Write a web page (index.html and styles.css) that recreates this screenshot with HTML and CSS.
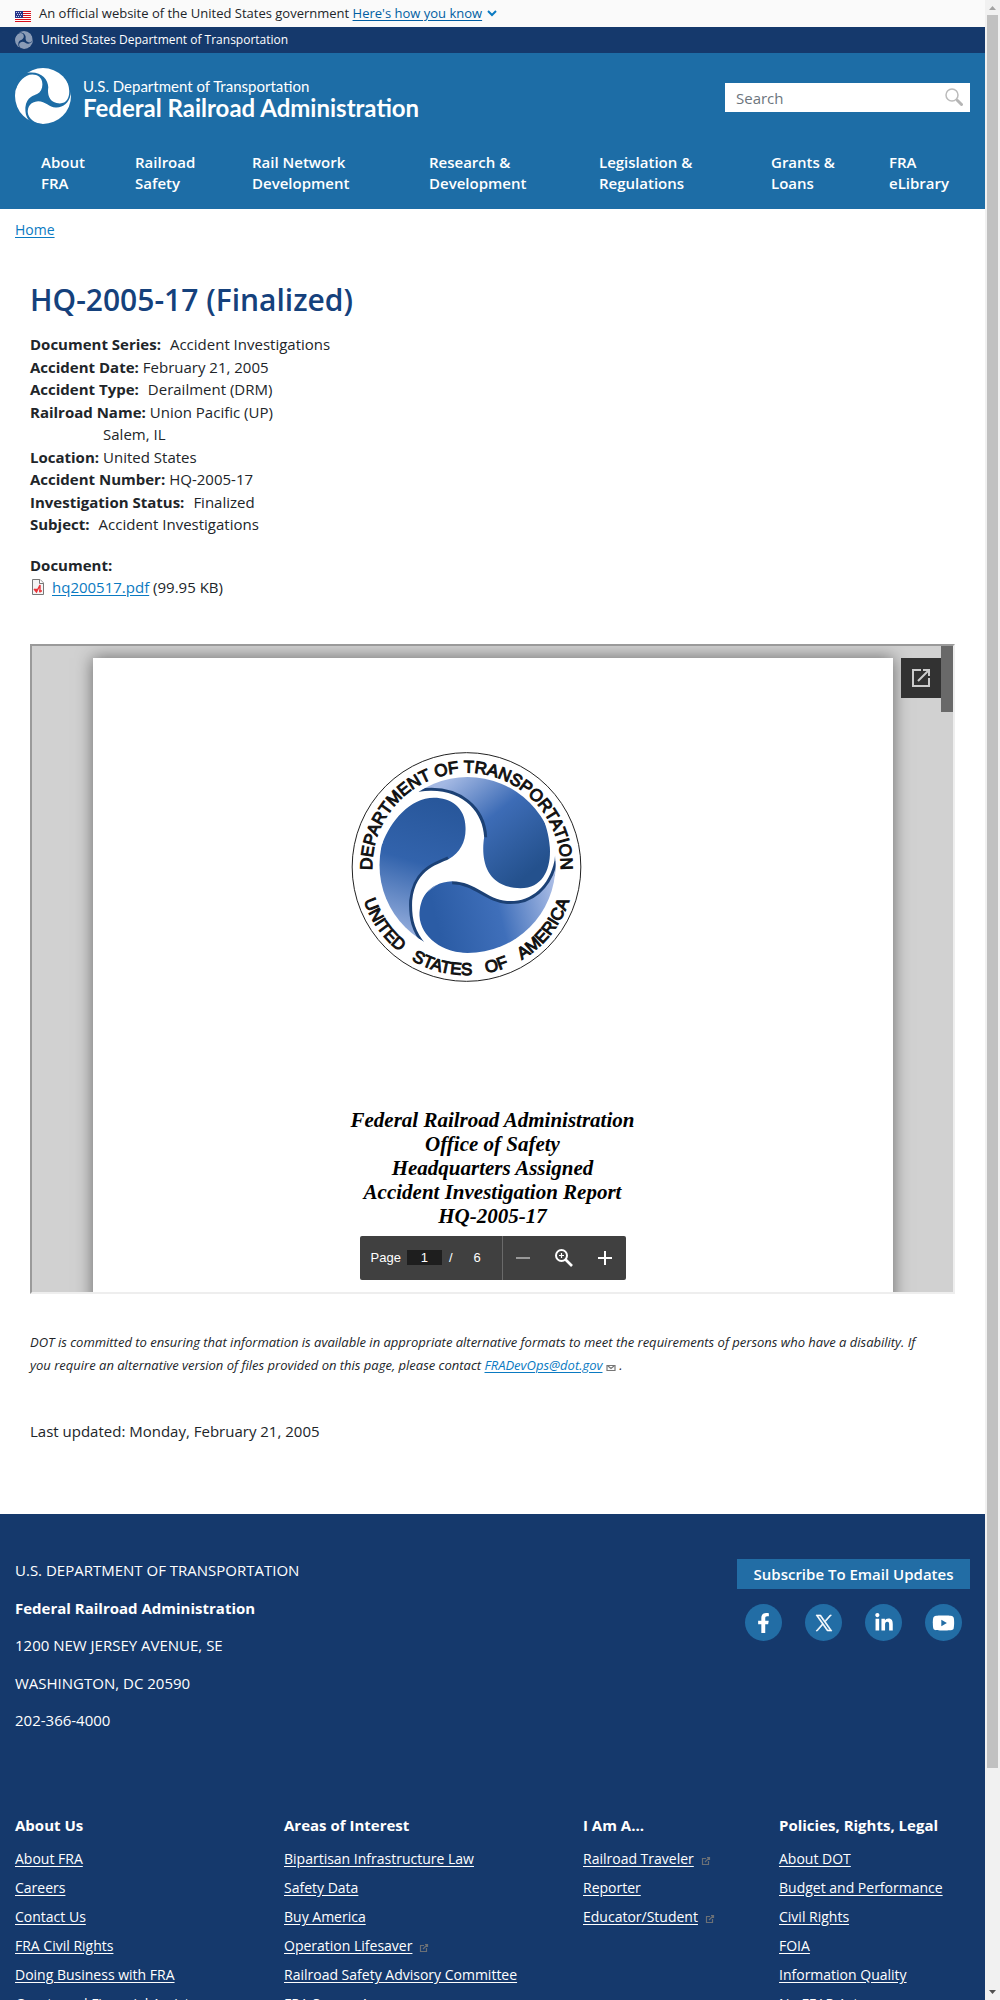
FILE: index.html
```html
<!DOCTYPE html>
<html lang="en">
<head>
<meta charset="utf-8">
<title>HQ-2005-17 (Finalized) | FRA</title>
<link rel="stylesheet" href="styles.css">
</head>
<body>
<svg class="defs" aria-hidden="true">
  <symbol id="triskelion" viewBox="237 169 528 528">
    <path d="M355 213C480 195 548 270 551 350C543 400 545 500 660 503C730 503 752 440 748 380C745 340 735 310 725 285L775 300L762 420C745 500 690 545 620 541C560 538 525 483 455 482C380 487 357 535 357 585C360 650 430 697 501 697L440 715L378 672C340 630 333 590 335 540C345 440 420 430 445 415C480 395 497 360 495 320C495 260 450 231 400 231C330 231 270 300 245 370L225 330L290 225Z"/>
  </symbol>
  <symbol id="external" viewBox="0 0 10 10">
    <path d="M5 2.500H1.500V8.500H7.500V5M4 6L8 2M6 1.500H8.500V4" fill="none" stroke="#6b7076" stroke-width="1.200"/>
  </symbol>
</svg>
<div class="window">
  <div class="page">
    <div class="gov-banner">
      <svg class="flag" viewBox="0 0 16 11" aria-hidden="true"><path fill="#fff" d="M0 0h16v11H0z"/><path stroke="#d8101c" d="M0 .500h16M0 2.500h16M0 4.500h16M0 6.500h16M0 8.500h16M0 10.500h16"/><path fill="#27368b" d="M0 0h8v7H0z"/><path stroke="#c9cfe8" stroke-dasharray="1 1" d="M1 1.500h6M2 3.500h5M1 5.500h6"/></svg>
      <span>An official website of the United States government <a class="how" href="#how">Here's how you know</a></span>
      <svg class="chevron" viewBox="0 0 10 7" aria-hidden="true"><path d="M1 1L5 5L9 1" fill="none" stroke="#0a7ac2" stroke-width="2"/></svg>
    </div>
    <div class="dot-bar">
      <svg class="dot-mark" viewBox="0 0 18 18" aria-hidden="true"><circle cx="9" cy="9" r="9" fill="#8a9bb6"/><use href="#triskelion" width="18" height="18" fill="#15396c"/></svg>
      <span>United States Department of Transportation</span>
    </div>
    <header class="masthead">
      <div class="brand-row">
        <a class="brand" href="#home">
          <svg class="brand-mark" viewBox="0 0 56 56" aria-hidden="true"><circle cx="28" cy="28" r="28" fill="#fff"/><use href="#triskelion" width="56" height="56" fill="#1d6da6"/></svg>
          <span class="brand-text"><span class="brand-dept">U.S. Department of Transportation</span><span class="brand-name">Federal Railroad Administration</span></span>
        </a>
        <form class="search">
          <input class="search-input" type="text" placeholder="Search" aria-label="Search">
          <button class="search-button" type="button" aria-label="Submit search"><svg viewBox="0 0 18 18" aria-hidden="true"><circle cx="7" cy="7" r="6" fill="none" stroke="#bbb" stroke-width="1.500"/><path d="M11 11l2 2" stroke="#bbb" stroke-width="1.500"/><path d="M12.500 12.500l4 4" stroke="#b5b5b5" stroke-width="3" stroke-linecap="round"/></svg></button>
        </form>
      </div>
      <nav class="main-nav">
        <a href="#about">About<br>FRA</a>
        <a href="#safety">Railroad<br>Safety</a>
        <a href="#network">Rail Network<br>Development</a>
        <a href="#research">Research &amp;<br>Development</a>
        <a href="#legislation">Legislation &amp;<br>Regulations</a>
        <a href="#grants">Grants &amp;<br>Loans</a>
        <a href="#elibrary">FRA<br>eLibrary</a>
      </nav>
    </header>
    <div class="breadcrumb"><a href="#home">Home</a></div>
    <main class="content">
      <h1>HQ-2005-17 (Finalized)</h1>
      <div class="fields">
        <div class="field wide"><b>Document Series:</b><span>Accident Investigations</span></div>
        <div class="field"><b>Accident Date:</b><span>February 21, 2005</span></div>
        <div class="field wide"><b>Accident Type:</b><span>Derailment (DRM)</span></div>
        <div class="field"><b>Railroad Name:</b><span>Union Pacific (UP)</span></div>
        <div class="field"><b>Location:</b><span>Salem, IL<br>United States</span></div>
        <div class="field"><b>Accident Number:</b><span>HQ-2005-17</span></div>
        <div class="field wide"><b>Investigation Status:</b><span>Finalized</span></div>
        <div class="field wide"><b>Subject:</b><span>Accident Investigations</span></div>
      </div>
      <div class="document">
        <b>Document:</b>
        <div class="file">
          <svg class="pdf-icon" viewBox="0 0 16 16" aria-hidden="true"><path d="M2.500 .500H10L13.500 4V15.500H2.500Z" fill="#f4f4f4" stroke="#777"/><path d="M9.500 .500V4.500H13.500" fill="#fff" stroke="#777"/><path d="M4 10L6.500 13L10 6V13.500M4 10.500H7L5.500 12.500M9 12H12" fill="none" stroke="#e8343a" stroke-width="1.400"/></svg>
          <span><a href="#pdf">hq200517.pdf</a> (99.95 KB)</span>
        </div>
      </div>
      <section class="viewer" aria-label="Document preview">
        <article class="sheet">
          <svg class="seal" viewBox="152 94 692 690" role="img" aria-label="Department of Transportation seal">
            <defs>
              <clipPath id="disc"><circle cx="501" cy="433" r="264"/></clipPath>
              <linearGradient id="gl" gradientUnits="userSpaceOnUse" x1="440" y1="250" x2="320" y2="660"><stop offset="0" stop-color="#28579b"/><stop offset=".45" stop-color="#3263ac"/><stop offset="1" stop-color="#9cb3e0"/></linearGradient>
              <linearGradient id="gr" gradientUnits="userSpaceOnUse" x1="430" y1="190" x2="660" y2="480"><stop offset="0" stop-color="#a3b8e3"/><stop offset=".45" stop-color="#3d6cb6"/><stop offset="1" stop-color="#24518d"/></linearGradient>
              <linearGradient id="gb" gradientUnits="userSpaceOnUse" x1="400" y1="570" x2="770" y2="480"><stop offset="0" stop-color="#2b5ca5"/><stop offset=".5" stop-color="#3f6fba"/><stop offset="1" stop-color="#b0c1e8"/></linearGradient>
              <path id="top-arc" d="M215 439A283 283 0 0 1 781 439"/>
              <path id="bottom-arc" d="M174 439A324 324 0 0 0 822 439"/>
            </defs>
            <circle cx="498" cy="439" r="343" fill="#fff" stroke="#222" stroke-width="3"/>
            <g clip-path="url(#disc)">
              <path d="M480 440L525 350L460 222H200V720H360L345 540Z" fill="url(#gl)"/>
              <path d="M480 440L525 350L460 222L300 200V150H800V425L720 510L640 525Z" fill="url(#gr)"/>
              <path d="M480 440L640 520L710 505L752 450L765 415H800V720H360L345 540Z" fill="url(#gb)"/>
              <path d="M355 213C480 195 548 270 551 350M762 420C745 500 690 545 620 541C560 538 525 483 455 482M378 672C340 630 333 590 335 540C345 440 420 430 445 415" fill="none" stroke="#1c4175" stroke-width="18"/>
            </g>
            <use href="#triskelion" x="237" y="169" width="528" height="528" fill="#fff"/>
            <text class="seal-text" text-anchor="middle"><textPath href="#top-arc" startOffset="50%">DEPARTMENT OF TRANSPORTATION</textPath></text>
            <text class="seal-text" text-anchor="middle"><textPath href="#bottom-arc" startOffset="50%">UNITED &#160;&#160;STATES &#160;&#160;OF &#160;&#160;AMERICA</textPath></text>
          </svg>
          <p class="report-title">Federal Railroad Administration<br>Office of Safety<br>Headquarters Assigned<br>Accident Investigation Report<br>HQ-2005-17</p>
        </article>
        <button class="pop-out" type="button" aria-label="Open in new window"><svg viewBox="0 0 18 18" aria-hidden="true"><path d="M9 1H1V17H17V9M11 1H17V7M6 12L16.500 1.500" fill="none" stroke="#ccc" stroke-width="2"/></svg></button>
        <div class="viewer-thumb"></div>
        <div class="toolbar">
          <label for="page-no">Page</label>
          <input id="page-no" class="page-no" type="text" value="1">
          <span class="slash">/</span>
          <span class="total">6</span>
          <div class="zoom-tools">
            <button type="button" aria-label="Zoom out"><svg viewBox="0 0 18 18" aria-hidden="true"><path d="M2 9H16" stroke="#999" stroke-width="2"/></svg></button>
            <button type="button" aria-label="Fit page"><svg viewBox="0 0 18 18" aria-hidden="true"><circle cx="6.500" cy="6.500" r="5.500" fill="none" stroke="#fff" stroke-width="2"/><path d="M10.500 10.500L17 17" stroke="#fff" stroke-width="2.600"/><path d="M6.500 4V9M4 6.500H9" stroke="#fff" stroke-width="1.200"/></svg></button>
            <button type="button" aria-label="Zoom in"><svg viewBox="0 0 18 18" aria-hidden="true"><path d="M2 9H16M9 2V16" stroke="#fff" stroke-width="2"/></svg></button>
          </div>
        </div>
      </section>
      <p class="notice">DOT is committed to ensuring that information is available in appropriate alternative formats to meet the requirements of persons who have a disability. If you require an alternative version of files provided on this page, please contact <a href="#mail">FRADevOps@dot.gov</a> <svg class="mail-icon" viewBox="0 0 10 8" aria-hidden="true"><path d="M1 1.500H9V6.500H1Z M2 2L5 4.500L8 2" fill="none" stroke="#777" stroke-width="1.200"/></svg> .</p>
      <p class="updated">Last updated: Monday, February 21, 2005</p>
    </main>
    <footer class="footer">
      <div class="footer-top">
        <address class="address">
          <p>U.S. DEPARTMENT OF TRANSPORTATION</p>
          <p><b>Federal Railroad Administration</b></p>
          <p>1200 NEW JERSEY AVENUE, SE</p>
          <p>WASHINGTON, DC 20590</p>
          <p>202-366-4000</p>
        </address>
        <div class="connect">
          <a class="subscribe" href="#subscribe">Subscribe To Email Updates</a>
          <div class="social">
            <a href="#facebook" aria-label="Facebook"><svg viewBox="0 0 320 512" height="20" width="13"><path d="M279.140 288l14.220-92.660h-88.910v-60.130c0-25.350 12.420-50.060 52.240-50.060h40.420V6.260S260.430 0 225.360 0c-73.220 0-121.080 44.380-121.080 124.720v70.620H22.890V288h81.390v224h100.170V288z"/></svg></a>
            <a href="#x" aria-label="X"><svg class="x-mark" viewBox="0 0 24 24" height="16" width="16"><path d="M14.258 10.152 23.176 0h-2.113l-7.747 8.813L7.133 0H0l9.352 13.328L0 23.973h2.113l8.176-9.309 6.531 9.309h7.133zm-2.895 3.293-.949-1.328L2.875 1.560h3.246l6.086 8.523.945 1.328 7.910 11.078h-3.246z"/></svg></a>
            <a href="#linkedin" aria-label="LinkedIn"><svg viewBox="0 0 448 512" height="20" width="18"><path d="M100.280 448H7.400V148.900h92.880zM53.790 108.100C24.090 108.100 0 83.500 0 53.800a53.790 53.790 0 0 1 107.580 0c0 29.700-24.100 54.300-53.790 54.300zM447.900 448h-92.680V302.400c0-34.700-.7-79.200-48.290-79.200-48.290 0-55.690 37.700-55.690 76.700V448h-92.780V148.900h89.080v40.800h1.300c12.400-23.500 42.690-48.300 87.880-48.300 94 0 111.280 61.900 111.280 142.300V448z"/></svg></a>
            <a href="#youtube" aria-label="YouTube"><svg viewBox="0 0 576 512" height="20" width="23"><path d="M549.655 124.083c-6.281-23.650-24.787-42.276-48.284-48.597C458.781 64 288 64 288 64S117.220 64 74.629 75.486c-23.497 6.322-42.003 24.947-48.284 48.597-11.412 42.867-11.412 132.305-11.412 132.305s0 89.438 11.412 132.305c6.281 23.650 24.787 41.500 48.284 47.821C117.220 448 288 448 288 448s170.780 0 213.371-11.486c23.497-6.321 42.003-24.171 48.284-47.821 11.412-42.867 11.412-132.305 11.412-132.305s0-89.438-11.412-132.305zm-317.510 213.508V175.185l142.739 81.205-142.739 81.201z"/></svg></a>
          </div>
        </div>
      </div>
      <div class="footer-links">
        <section><h2>About Us</h2><ul>
          <li><a href="#a1">About FRA</a></li><li><a href="#a2">Careers</a></li><li><a href="#a3">Contact Us</a></li><li><a href="#a4">FRA Civil Rights</a></li><li><a href="#a5">Doing Business with FRA</a></li><li><a href="#a6">Grants and Financial Assistance</a></li></ul></section>
        <section><h2>Areas of Interest</h2><ul>
          <li><a href="#b1">Bipartisan Infrastructure Law</a></li><li><a href="#b2">Safety Data</a></li><li><a href="#b3">Buy America</a></li><li><a href="#b4">Operation Lifesaver</a><svg class="ext"><use href="#external"/></svg></li><li><a href="#b5">Railroad Safety Advisory Committee</a></li><li><a href="#b6">FRA Screen Accessory</a></li></ul></section>
        <section><h2>I Am A...</h2><ul>
          <li><a href="#c1">Railroad Traveler</a><svg class="ext"><use href="#external"/></svg></li><li><a href="#c2">Reporter</a></li><li><a href="#c3">Educator/Student</a><svg class="ext"><use href="#external"/></svg></li></ul></section>
        <section><h2>Policies, Rights, Legal</h2><ul>
          <li><a href="#d1">About DOT</a></li><li><a href="#d2">Budget and Performance</a></li><li><a href="#d3">Civil Rights</a></li><li><a href="#d4">FOIA</a></li><li><a href="#d5">Information Quality</a></li><li><a href="#d6">No FEAR Act</a></li></ul></section>
      </div>
    </footer>
  </div>
  <div class="scrollbar" aria-hidden="true">
    <svg viewBox="0 0 15 15"><path d="M4 10H11L7.500 6Z" fill="#a3a3a3"/></svg>
    <div class="track"><div class="thumb"></div></div>
    <svg viewBox="0 0 15 15"><path d="M4 5H11L7.500 9Z" fill="#505050"/></svg>
  </div>
</div>
</body>
</html>
```
FILE: styles.css
```css
* { box-sizing: border-box; }
body {
  margin: 0;
  font-family: "Open Sans", "Noto Sans", sans-serif;
  font-size: 15px;
  line-height: 1.5;
  color: #212529;
  background: #fff;
}
p, h1, h2, ul { margin: 0; padding: 0; }
ul { list-style: none; }
a { color: #0a7ac2; text-underline-offset: 2px; }
svg { display: block; flex: none; }
.defs { position: absolute; width: 0; height: 0; }
.window { display: flex; height: 100vh; overflow: hidden; }
.page { flex: 1; min-width: 0; overflow: hidden; }

.scrollbar { display: flex; flex-direction: column; width: 15px; background: #f1f1f1; }
.scrollbar svg { width: 15px; height: 15px; }
.track { flex: 1; padding: 0 2px; }
.thumb { height: 89%; background: #c1c1c1; }

.gov-banner {
  display: flex; align-items: center;
  height: 27px; padding: 0 15px;
  background: #fafafa; font-size: 13px;
}
.flag { width: 16px; height: 11px; margin: 5px 8px 0 0; }
.how { color: #005ea2; }
.chevron { width: 10px; height: 7px; margin-left: 5px; }
.dot-bar {
  display: flex; align-items: center; gap: 8px;
  height: 26px; padding: 0 15px;
  background: #15396c; color: #fff; font-size: 12px;
}
.dot-mark { width: 18px; height: 18px; }

.masthead { padding: 15px; background: #1d6da6; color: #fff; }
.brand-row { display: flex; justify-content: space-between; align-items: flex-start; }
.brand { display: flex; align-items: center; gap: 12px; color: #fff; text-decoration: none; }
.brand-mark { width: 56px; height: 56px; }
.brand-text { display: flex; flex-direction: column; padding-top: 4px; font-family: Lato, sans-serif; }
.brand-dept { font-size: 15px; line-height: 20px; }
.brand-name { font-size: 24px; line-height: 24px; font-weight: 700; }
.search { display: flex; width: 245px; height: 29px; margin-top: 15px; background: #fff; }
.search-input {
  flex: 1; min-width: 0; padding: 2px 0 0 11px; border: 0; background: none;
  font: inherit; color: #212529;
}
.search-input::placeholder { color: #6c757d; opacity: 1; }
.search-button { display: flex; padding: 5px 7px; border: 0; background: none; }
.search-button svg { width: 18px; height: 18px; }
.main-nav {
  display: grid;
  grid-template-columns: 94fr 117fr 177fr 170fr 172fr 118fr 107fr;
  margin-top: 28px;
}
.main-nav a {
  padding-left: 26px; color: #fff; font-weight: 600; line-height: 21px;
  text-decoration: none; white-space: nowrap;
}

.breadcrumb { padding: 10px 15px 0; font-size: 14px; line-height: 21px; }
.content { padding: 37px 30px 72px; }
h1 { color: #15417c; font-size: 30px; line-height: 45px; font-weight: 600; }
.fields { margin-top: 11px; }
.field { display: flex; align-items: flex-end; gap: 4px; }
.field.wide { gap: 9px; }
.document { margin-top: 18px; }
.file { display: flex; align-items: center; gap: 6px; }
.pdf-icon { width: 16px; height: 16px; }

.viewer {
  position: relative; display: flex; justify-content: center;
  height: 650px; margin-top: 45px; padding: 12px 60px 0;
  overflow: hidden; background: #d1d1d1;
  border: 2px solid; border-color: #9a9a9a #eee #eee #9a9a9a;
}
.sheet {
  flex: 0 1 800px; height: 1035px; padding-top: 94px;
  background: #fff; box-shadow: 0 0 16px rgba(0, 0, 0, .5);
}
.seal { width: 231px; height: 230px; margin-left: 258px; }
.seal-text { font-family: "Liberation Sans", Arial, sans-serif; font-size: 51px; fill: #111; stroke: #111; stroke-width: 3px; }
.report-title {
  margin-top: 126px; text-align: center; color: #000;
  font: italic 700 21px/24px "Liberation Serif", "Times New Roman", serif;
}
.pop-out {
  position: absolute; top: 12px; right: 12px;
  display: grid; place-items: center; width: 40px; height: 40px;
  padding: 0; border: 0; background: #323232;
}
.pop-out svg { width: 18px; height: 18px; }
.viewer-thumb { position: absolute; top: 0; right: 0; width: 12px; height: 66px; background: #696969; }
.toolbar {
  position: absolute; bottom: 12px; left: calc(50% - 133px);
  display: flex; align-items: center;
  width: 266px; height: 44px; padding-left: 11px;
  border-radius: 2px; background: #404040; color: #fff;
  font: 13px/16px "Liberation Sans", Arial, sans-serif;
}
.page-no {
  width: 35px; height: 15px; margin-left: 6px; padding: 0; border: 0;
  background: #1e1e1e; color: #fff; font: inherit; text-align: center;
}
.slash { margin-left: 7px; }
.total { flex: 1; text-align: center; }
.zoom-tools {
  display: flex; align-items: center; justify-content: space-around;
  width: 124px; height: 44px; border-left: 1px solid #6a6a6a;
}
.zoom-tools button { padding: 0; border: 0; background: none; }
.zoom-tools svg { width: 18px; height: 18px; }

.notice { margin-top: 37px; padding-right: 16px; font-size: 13px; line-height: 23px; font-style: italic; }
.mail-icon { display: inline-block; width: 10px; height: 8px; vertical-align: -2px; }
.updated { margin-top: 43px; }

.footer { padding: 45px 15px 0; background: #15396c; color: #fff; }
.footer a { color: #fff; }
.footer-top { display: flex; justify-content: space-between; align-items: flex-start; }
.address { display: grid; gap: 15px; font-style: normal; }
.connect { display: flex; flex-direction: column; gap: 15px; min-width: 233px; }
.subscribe {
  background: #226da5; line-height: 30px; text-align: center;
  font-weight: 600; text-decoration: none;
}
.social { display: flex; justify-content: space-between; padding: 0 8px; }
.social a { display: grid; place-items: center; width: 37px; height: 37px; border-radius: 50%; background: #226da5; fill: #fff; }
.x-mark { stroke: #fff; stroke-width: 1px; overflow: visible; }
.footer-links {
  display: grid; grid-template-columns: 269fr 299fr 196fr 191fr;
  margin-top: 82px; white-space: nowrap;
}
h2 { margin-bottom: 12px; font-size: 15px; line-height: 22px; font-weight: 700; }
.footer-links li { display: flex; align-items: center; gap: 7px; height: 29px; padding-bottom: 8px; font-size: 14px; line-height: 21px; }
.ext { width: 10px; height: 10px; margin-top: 6px; }
```
